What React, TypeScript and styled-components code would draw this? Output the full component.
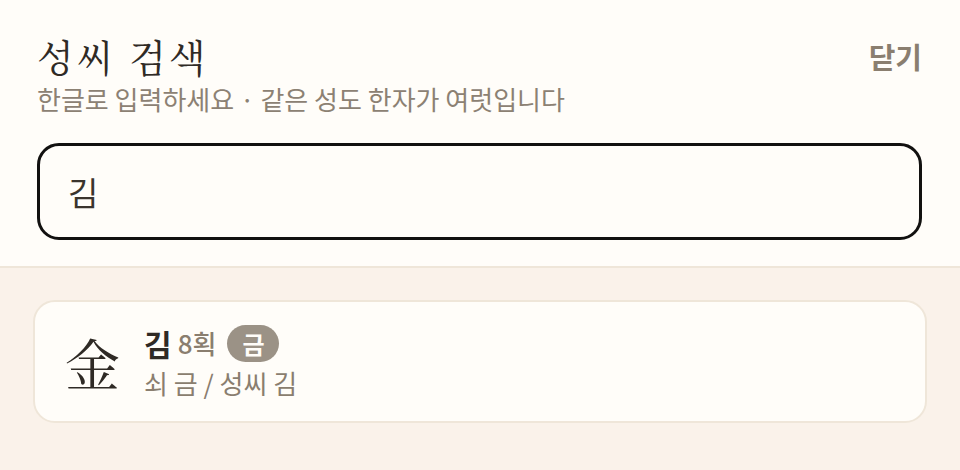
import React from "react";
import styled, { createGlobalStyle } from "styled-components";

const Global = createGlobalStyle`
  html, body { margin: 0; padding: 0; background: #faf2ea; }
  body { font-family: "Noto Sans CJK KR", "Noto Sans", sans-serif; }
  * { box-sizing: border-box; }
`;

const Page = styled.div`
  width: 960px;
  height: 470px;
  display: flex;
  flex-direction: column;
  background: #faf2ea;
`;

const Header = styled.header`
  background: #fffdf9;
  border-bottom: 2px solid #efe6d9;
  padding: 31px 38px 26px 37px;
  display: flex;
  flex-direction: column;
`;

const TitleRow = styled.div`
  display: flex;
  justify-content: space-between;
  align-items: flex-start;
`;

const Title = styled.h1`
  margin: 0;
  font-family: "Noto Serif CJK KR", "Noto Serif KR", serif;
  font-weight: 400;
  font-size: 38px;
  line-height: 50px;
  color: #2f2a25;
  letter-spacing: 3px;
`;

const CloseButton = styled.button`
  border: none;
  background: none;
  padding: 0;
  margin-top: 7px;
  font-family: "Noto Sans CJK KR", sans-serif;
  font-weight: 700;
  font-size: 29px;
  line-height: 36px;
  color: #8a7e6f;
  cursor: pointer;
`;

const Subtitle = styled.p`
  margin: 2px 0 0;
  font-size: 26px;
  line-height: 32px;
  color: #8c8173;
`;

const SearchInput = styled.input`
  margin-top: 28px;
  height: 97px;
  width: 100%;
  border: 3px solid #121110;
  border-radius: 22px;
  background: #fffdf9;
  padding: 0 28px;
  font-family: "Noto Sans CJK KR", sans-serif;
  font-size: 33px;
  color: #3a342d;
  outline: none;
`;

const Results = styled.section`
  padding: 32px 33px;
`;

const Card = styled.div`
  height: 123px;
  background: #fffdf9;
  border: 2px solid #efe6d9;
  border-radius: 22px;
  display: flex;
  align-items: center;
  padding: 0 30px;
  gap: 24px;
`;

const Hanja = styled.div`
  font-family: "Noto Serif CJK KR", "Noto Serif KR", serif;
  font-size: 55px;
  line-height: 62px;
  color: #2f2a25;
`;

const Info = styled.div`
  display: flex;
  flex-direction: column;
  gap: 5px;
`;

const NameRow = styled.div`
  display: flex;
  align-items: center;
  gap: 6px;
  height: 38px;
`;

const Name = styled.span`
  font-weight: 700;
  font-size: 30px;
  line-height: 38px;
  color: #2f2a25;
`;

const Strokes = styled.span`
  font-size: 26px;
  font-weight: 500;
  line-height: 38px;
  color: #8a7e6f;
`;

const Badge = styled.span`
  margin-left: 5px;
  background: #9b9286;
  color: #fffdf9;
  border-radius: 19px;
  padding: 0 15px;
  height: 37px;
  display: inline-flex;
  align-items: center;
  font-size: 24px;
  font-weight: 700;
`;

const Meaning = styled.div`
  font-size: 26px;
  line-height: 32px;
  color: #8a7e6f;
`;

export default function App() {
  return (
    <Page>
      <Global />
      <Header>
        <TitleRow>
          <Title>성씨 검색</Title>
          <CloseButton>닫기</CloseButton>
        </TitleRow>
        <Subtitle>한글로 입력하세요 · 같은 성도 한자가 여럿입니다</Subtitle>
        <SearchInput defaultValue="김" />
      </Header>
      <Results>
        <Card>
          <Hanja>金</Hanja>
          <Info>
            <NameRow>
              <Name>김</Name>
              <Strokes>8획</Strokes>
              <Badge>금</Badge>
            </NameRow>
            <Meaning>쇠 금 / 성씨 김</Meaning>
          </Info>
        </Card>
      </Results>
    </Page>
  );
}
